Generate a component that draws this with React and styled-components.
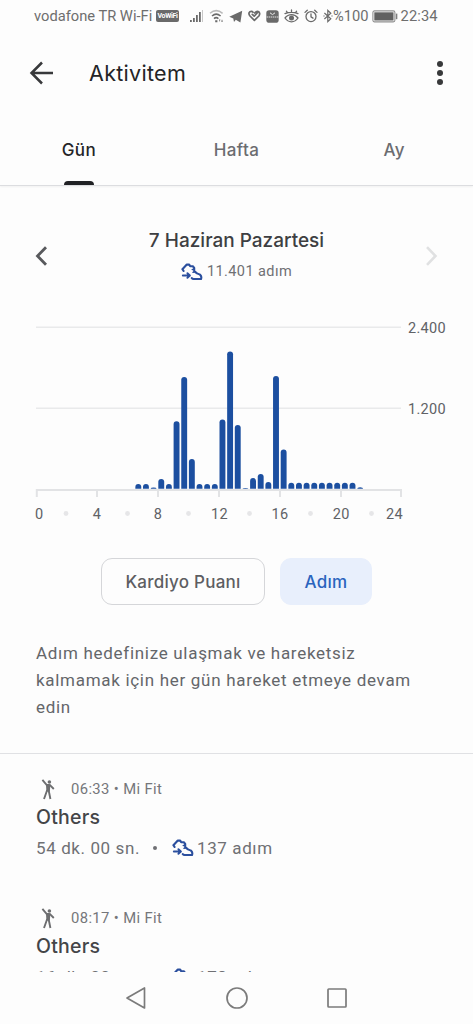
import React from "react";
import styled, { createGlobalStyle } from "styled-components";

const Global = createGlobalStyle`
  * { box-sizing: border-box; }
  body { margin: 0; background: #fdfdfd; }
  svg { display: block; flex: none; }
`;

const body = `Roboto, "Liberation Sans", sans-serif`;
const display = `Inter, Roboto, sans-serif`;

const Screen = styled.div`
  width: 473px;
  height: 1024px;
  display: flex;
  flex-direction: column;
  overflow: hidden;
  background: #fdfdfd;
  font-family: ${body};
  color: #5f6165;
`;

const StatusBar = styled.header`
  height: 32px;
  flex: none;
  display: flex;
  align-items: center;
  padding: 0 32px 0 34px;
  font-size: 14.7px;
  color: #6e6e6e;
`;

const StatusText = styled.span`
  white-space: nowrap;
  width: ${(p) => p.$w}px;
  letter-spacing: ${(p) => p.$ls || 0}px;
`;

const StatusIcons = styled.div`
  width: 144px;
  display: flex;
  justify-content: space-between;
  align-items: center;
  margin: 0 0 0 10px;
`;

const WifiBadge = styled.span`
  width: 23px;
  height: 12px;
  border-radius: 2px;
  background: #6a6a6a;
  color: #fff;
  font-size: 7px;
  font-weight: 700;
  line-height: 12px;
  text-align: center;
  letter-spacing: -0.3px;
`;

const AppBar = styled.div`
  height: 82px;
  flex: none;
  display: flex;
  align-items: center;
  padding: 0 29px 0 29px;
`;

const Title = styled.h1`
  flex: 1;
  margin: 0 0 0 35px;
  font: 400 21.5px/28px ${display};
  letter-spacing: 0.3px;
  color: #242426;
`;

const Tabs = styled.nav`
  height: 72px;
  flex: none;
  display: grid;
  grid-template-columns: repeat(3, 1fr);
  border-bottom: 1px solid #dcdde0;
  box-shadow: 0 1px 2px rgba(0, 0, 0, 0.05);
`;

const Tab = styled.div`
  display: flex;
  flex-direction: column;
  align-items: center;
  justify-content: space-between;
  padding-top: 24px;
  font: 500 17px/24px ${display};
  letter-spacing: 0.4px;
  color: ${(p) => (p.$active ? "#252527" : "#6b6c70")};
`;

const Indicator = styled.span`
  width: 30px;
  height: 4px;
  border-radius: 4px 4px 0 0;
  background: #202124;
`;

const DayPicker = styled.section`
  height: 130px;
  flex: none;
  display: flex;
  align-items: center;
  justify-content: space-between;
  padding: 10px 34px 0 34px;
`;

const DayInfo = styled.div`
  display: flex;
  flex-direction: column;
  align-items: center;
  gap: 4px;
`;

const DayName = styled.h2`
  margin: 0;
  font: 500 19px/28px ${display};
  color: #3e3f42;
`;

const Steps = styled.span`
  display: flex;
  align-items: center;
  gap: ${(p) => p.$gap || 4}px;
  font-size: ${(p) => p.$size}px;
  line-height: 26px;
  letter-spacing: ${(p) => p.$ls}px;
  color: #6f7074;
`;

const ChartBox = styled.section`
  height: 214px;
  flex: none;
  text { font: 14.5px ${body}; fill: #606266; letter-spacing: 0.3px; }
`;

const Chips = styled.div`
  flex: none;
  display: flex;
  justify-content: center;
  gap: 15px;
  padding-top: 28px;
`;

const Chip = styled.button`
  width: ${(p) => p.$w}px;
  height: 47px;
  padding: 0;
  border-radius: 11px;
  border: 1px solid ${(p) => (p.$active ? "#e8effc" : "#d5d6d9")};
  background: ${(p) => (p.$active ? "#e8effc" : "transparent")};
  color: ${(p) => (p.$active ? "#2a64be" : "#5d5e62")};
  font: 500 17px/24px ${display};
  letter-spacing: ${(p) => p.$ls}px;
`;

const Hint = styled.p`
  flex: none;
  height: 149px;
  margin: 0;
  padding: 35px 36px 0;
  font-size: 17px;
  line-height: 27px;
  letter-spacing: 0.7px;
  color: #64666a;
  border-bottom: 1px solid #e0e1e4;
`;

const Feed = styled.main`
  flex: 1;
  min-height: 0;
  overflow: hidden;
`;

const Entry = styled.article`
  height: 128.5px;
  padding: 22px 36px 0;
`;

const EntryMeta = styled.div`
  display: flex;
  align-items: center;
  height: 26px;
  gap: 11px;
  font-size: 14.8px;
  letter-spacing: 0.38px;
  color: #75767a;
`;

const EntryTitle = styled.h3`
  margin: 2px 0 3px;
  font: 500 19.5px/26px ${display};
  letter-spacing: 0.25px;
  color: #444548;
`;

const EntryStats = styled.div`
  display: flex;
  align-items: center;
  height: 30px;
  font-size: 17px;
  letter-spacing: 0.6px;
  color: #6f7074;
`;

const Dot = styled.span`
  width: 4px;
  height: 4px;
  margin: 0 15px 0 13px;
  border-radius: 50%;
  background: #6f7074;
`;

const Duration = styled.span`
  width: 104px;
  white-space: nowrap;
`;

const SystemNav = styled.footer`
  height: 52px;
  flex: none;
  display: flex;
  justify-content: center;
  align-items: center;
  gap: 77.5px;
`;

const Shoe = () => (
  <svg width="22" height="18" viewBox="0 0 22 18" fill="none" stroke="#2b4f9e" strokeWidth="2.1" strokeLinejoin="round" strokeLinecap="round">
    <path d="M2.6 8 L1.4 6.2 L5.8 1.6 L8.2 1.6 L9.2 3.2 L11.8 3.2 L13.2 5 V8.2 L16 10.4 L19 11.6 Q21 13.4 20 16 H12.6 Q11.4 16 10.8 15.2" />
    <path d="M11.2 6.6 L13 6 M12 9.4 L14 8.6" strokeWidth="1.4" />
    <path d="M1.8 12.5 H8.6 M6.4 10.2 L8.9 12.5 L6.4 14.8" strokeWidth="1.9" />
  </svg>
);

const Person = () => (
  <svg width="24" height="24" viewBox="0 0 24 24" fill="none" stroke="#6d6e70" strokeWidth="1.9">
    <circle cx="13.4" cy="5" r="1.8" fill="#6d6e70" stroke="none" />
    <path d="M6.4 2.8 L10.6 7.8 L14 8.2 L17.8 12" />
    <path d="M10 7.4 H14.2 V10 L13.8 14.5 H10.4 Z" fill="#6d6e70" stroke="none" />
    <path d="M11.2 13 L8 22 M12.6 13 L14.4 22" />
  </svg>
);

const c = "#6a6a6a";
const SignalIcon = () => (
  <svg width="15" height="14" viewBox="0 0 15 14">
    <path d="M1 11h1.8v2H1zM4 9h1.8v4H4zM7 6h1.8v7H7zM10 3h1.8v10H10z" fill={c} />
    <path d="M13 1h1v12h-1z" fill="#c8c8c8" />
  </svg>
);
const WifiIcon = () => (
  <svg width="15" height="14" viewBox="0 0 15 14" fill="none" stroke={c} strokeWidth="1.5">
    <path d="M1 4.3 Q7.2 -1 13.6 4.3" stroke="#b9b9b9" />
    <path d="M3 7 Q7.2 3.3 11.6 7" />
    <path d="M5 9.6 Q7.2 7.6 9.4 9.6" />
    <path d="M6.2 11.2h2.2v2H6.2zM10 10.5l1.4 0-.7 2.5zM13 10.2l.9 2.6h-1.7z" fill={c} stroke="none" />
  </svg>
);
const PlaneIcon = () => (
  <svg width="14" height="13" viewBox="0 0 14 13">
    <path d="M0.3 6.8 L13.2 0.8 L11.4 12.4 L6.8 9.8 L5 12 L4.3 8.6 Z" fill={c} />
  </svg>
);
const HeartIcon = () => (
  <svg width="13" height="12" viewBox="0 0 13 12" fill="none" stroke={c} strokeWidth="1.7" strokeLinejoin="round" strokeLinecap="round">
    <path d="M4.3 4.4 L6.2 6.2 L9.4 2.6 M6.6 3 Q9 0.4 11 2 Q12.4 3.8 10.9 6 L6.4 10.4 L2 6 Q0 3.4 1.8 1.8 Q3.8 0.6 5 2.2" />
  </svg>
);
const InboxIcon = () => (
  <svg width="13" height="13" viewBox="0 0 13 13">
    <rect x="0.3" y="0.3" width="12.4" height="12.4" rx="2.8" fill={c} />
    <path d="M4 2.8 L6.5 4.6 L9 2.8" fill="none" stroke="#eee" />
    <path d="M0.5 7 H12.5" stroke="#bbb" strokeWidth="1.4" strokeDasharray="1.5 0.6" />
  </svg>
);
const EyeIcon = () => (
  <svg width="15" height="14" viewBox="0 0 15 14" fill="none" stroke={c} strokeWidth="1.3" strokeLinecap="round">
    <path d="M1 4.6 Q7.5 2 14 4.6 M1 9 Q3.6 12.8 7.5 12.8 T14 9 M1 9 Q3.6 5.6 7.5 5.6 T14 9 M2.4 2.2l.7 1M7.5 1v1.8M12.6 2.2l-.7 1" />
    <circle cx="7.5" cy="9" r="2.5" fill={c} stroke="none" />
  </svg>
);
const AlarmIcon = () => (
  <svg width="14" height="14" viewBox="0 0 14 14" fill="none" stroke={c} strokeWidth="1.3" strokeLinecap="round">
    <circle cx="7" cy="7.6" r="5" />
    <path d="M7 4.8v3l2 1.3M1 3.4 L3.3 1.2 M13 3.4 L10.7 1.2" />
  </svg>
);
const BluetoothIcon = () => (
  <svg width="10" height="14" viewBox="0 0 10 14" fill="none" stroke={c} strokeWidth="1.2">
    <path d="M1.4 4 L7.8 9.8 L4.8 12.6 V1.4 L7.8 4.2 L1.4 10" />
    <path d="M0.4 6.4h1.2v1.2H0.4zM8.4 6.4h1.2v1.2H8.4z" fill={c} stroke="none" />
  </svg>
);
const BatteryIcon = () => (
  <svg width="27" height="13" viewBox="0 0 27 13">
    <rect x="0.9" y="0.9" width="22" height="11" rx="1.6" fill="none" stroke="#909090" strokeWidth="1.1" />
    <rect x="2.3" y="2.3" width="19.2" height="8.2" fill="#616161" />
    <path d="M24.6 3.6v5.6" stroke="#808080" strokeWidth="1.5" />
  </svg>
);

const BASE = 172.7;
const bars = [
  [13, 4.7], [14, 4.7], [15, 1.2], [16, 9.8], [17, 4.7], [18, 67.5], [19, 111.8], [20, 29.8],
  [21, 4.7], [22, 4.7], [23, 4.7], [24, 69.3], [25, 137.3], [26, 63.8], [27, 0.7], [28, 10.6],
  [29, 14.8], [30, 6.8], [31, 112.8], [32, 39.2],
  ...Array.from({ length: 9 }, (_, i) => [33 + i, 6]),
  [42, 1.5],
];

const barPath = (x, h) => {
  const r = Math.min(2.9, h);
  const top = BASE - h;
  return `M${x} ${BASE}V${top + r}Q${x} ${top} ${x + 2.95} ${top}Q${x + 5.9} ${top} ${x + 5.9} ${top + r}V${BASE}Z`;
};

const StepChart = () => (
  <ChartBox>
    <svg width="473" height="210" viewBox="0 0 473 210">
      <path d="M36 11.2H401M36 92.2H401" stroke="#e9eaeb" strokeWidth="1.6" />
      <path d="M36 173.9H402" stroke="#e2e3e5" strokeWidth="2" />
      {[36.8, 97, 158, 219, 280, 341, 401].map((x) => (
        <path key={x} d={`M${x} 173V181`} stroke="#e2e3e5" strokeWidth="2" />
      ))}
      {bars.map(([slot, h]) => (
        <path key={slot} d={barPath(35.9 + slot * 7.65, h)} fill="#1c4fa0" />
      ))}
      {[66, 127.5, 188.5, 249.5, 310.5, 371.5].map((x) => (
        <circle key={x} cx={x} cy="197.5" r="2.4" fill="#e6e6e8" />
      ))}
      <g textAnchor="middle">
        {[[39.2, 0], [97, 4], [158, 8], [219.5, 12], [280, 16], [341.3, 20], [394.5, 24]].map(([x, v]) => (
          <text key={v} x={x} y="202.8">{v}</text>
        ))}
      </g>
      <text x="408" y="16.8">2.400</text>
      <text x="408" y="97.8">1.200</text>
    </svg>
  </ChartBox>
);

const Activity = ({ time, duration, steps }) => (
  <Entry>
    <EntryMeta>
      <Person />
      <span>{time} • Mi Fit</span>
    </EntryMeta>
    <EntryTitle>Others</EntryTitle>
    <EntryStats>
      <Duration>{duration}</Duration>
      <Dot />
      <Steps $size={17} $ls={0.6} $gap={3}>
        <Shoe />
        {steps} adım
      </Steps>
    </EntryStats>
  </Entry>
);

export default function App() {
  return (
    <Screen>
      <Global />
      <StatusBar>
        <StatusText $w={122}>vodafone TR Wi-Fi</StatusText>
        <WifiBadge>VoWiFi</WifiBadge>
        <StatusIcons>
          <SignalIcon />
          <WifiIcon />
          <PlaneIcon />
          <HeartIcon />
          <InboxIcon />
          <EyeIcon />
          <AlarmIcon />
          <BluetoothIcon />
        </StatusIcons>
        <StatusText $w={39}>%100</StatusText>
        <BatteryIcon />
        <StatusText $w={38} $ls={0.1}>&#8202;22:34</StatusText>
      </StatusBar>
      <AppBar>
        <svg width="25" height="24" viewBox="0 0 25 24" fill="none" stroke="#38393b" strokeWidth="2.5">
          <path d="M24 12H3M13 1.5L2.5 12L13 22.5" />
        </svg>
        <Title>Aktivitem</Title>
        <svg width="8" height="26" viewBox="0 0 8 26" fill="#38393b">
          <circle cx="4" cy="4" r="3" />
          <circle cx="4" cy="13" r="3" />
          <circle cx="4" cy="22" r="3" />
        </svg>
      </AppBar>
      <Tabs>
        <Tab $active>Gün<Indicator /></Tab>
        <Tab>Hafta</Tab>
        <Tab>Ay</Tab>
      </Tabs>
      <DayPicker>
        <svg width="14" height="20" viewBox="0 0 14 20" fill="none" stroke="#58595c" strokeWidth="2.8">
          <path d="M12 1.2L3.5 10L12 18.8" />
        </svg>
        <DayInfo>
          <DayName>7 Haziran Pazartesi</DayName>
          <Steps $size={14.5} $ls={0.42}>
            <Shoe />
            11.401 adım
          </Steps>
        </DayInfo>
        <svg width="14" height="20" viewBox="0 0 14 20" fill="none" stroke="#e0e1e2" strokeWidth="2.6">
          <path d="M2 1.2L10.5 10L2 18.8" />
        </svg>
      </DayPicker>
      <StepChart />
      <Chips>
        <Chip $w={164} $ls={0.25}>Kardiyo Puanı</Chip>
        <Chip $w={92} $ls={0.3} $active>Adım</Chip>
      </Chips>
      <Hint>Adım hedefinize ulaşmak ve hareketsiz kalmamak için her gün hareket etmeye devam edin</Hint>
      <Feed>
        <Activity time="06:33" duration="54 dk. 00 sn." steps="137" />
        <Activity time="08:17" duration="16 dk. 00 sn." steps="178" />
      </Feed>
      <SystemNav>
        <svg width="22" height="24" viewBox="0 0 22 24" fill="none" stroke="#7b7b7b" strokeWidth="1.7" strokeLinejoin="round">
          <path d="M19.5 2V22L2 12Z" />
        </svg>
        <svg width="24" height="24" viewBox="0 0 24 24" fill="none" stroke="#7b7b7b" strokeWidth="1.7">
          <circle cx="12" cy="12" r="10" />
        </svg>
        <svg width="22" height="22" viewBox="0 0 22 22" fill="none" stroke="#7b7b7b" strokeWidth="1.7">
          <rect x="2" y="2" width="18" height="18" rx="0.8" />
        </svg>
      </SystemNav>
    </Screen>
  );
}
